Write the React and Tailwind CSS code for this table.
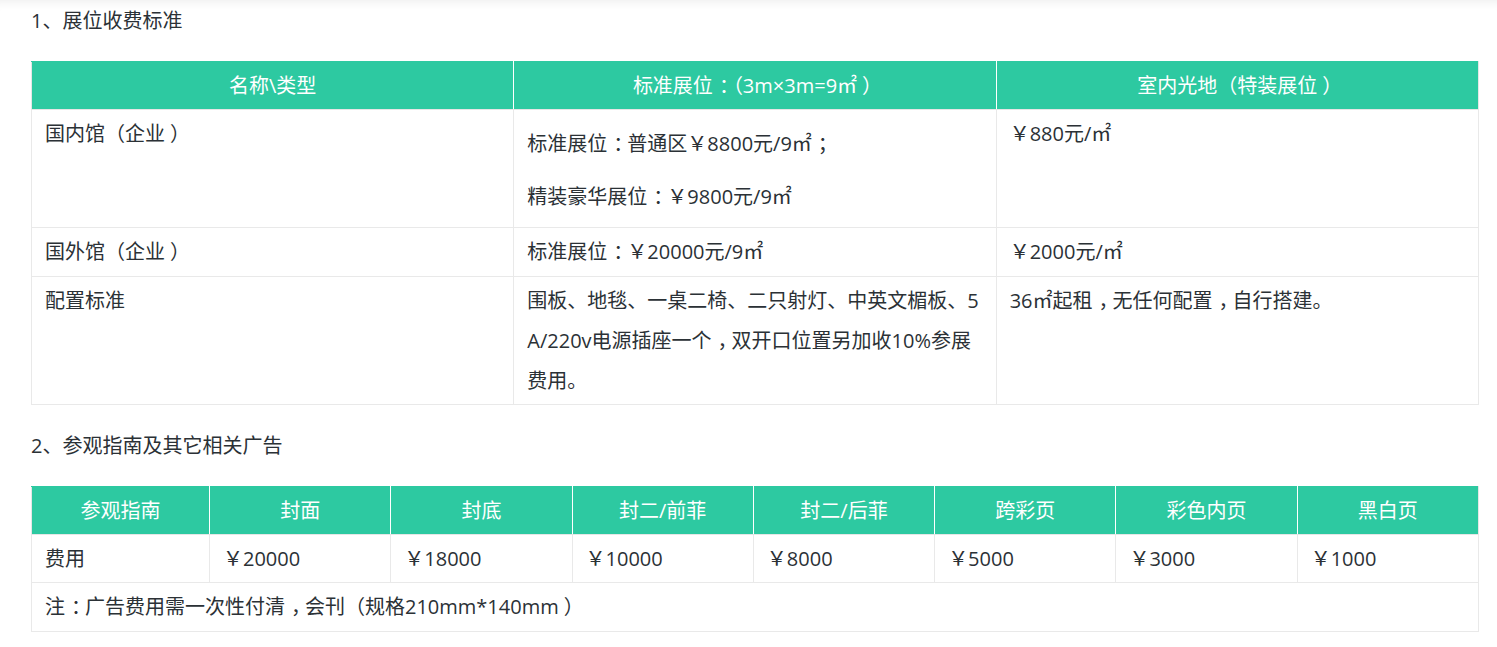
import React from "react";

const font = { fontFamily: '"Open Sans", "Noto Sans CJK SC", sans-serif' };

// the reference font centres full-width punctuation; pad the glyph towards the middle
const nudge = {
  "：": "pl-[6px] tracking-[-6px]",
  "，": "pl-[6px] tracking-[-6px]",
  "；": "pl-[6px] tracking-[-6px]",
  "）": "pl-[5px] tracking-[-5px]",
};

const Txt = ({ children }) =>
  String(children)
    .split(/([：），；])/)
    .map((part, i) =>
      nudge[part] ? (
        <span key={i} className={`leading-none ${nudge[part]}`}>
          {part}
        </span>
      ) : (
        part
      )
    );

const booth = [
  {
    name: "国内馆（企业）",
    std: ["标准展位：普通区￥8800元/9㎡；", "精装豪华展位：￥9800元/9㎡"],
    raw: "￥880元/㎡",
  },
  { name: "国外馆（企业）", std: ["标准展位：￥20000元/9㎡"], raw: "￥2000元/㎡" },
  {
    name: "配置标准",
    std: ["围板、地毯、一桌二椅、二只射灯、中英文楣板、5A/220v电源插座一个，双开口位置另加收10%参展费用。"],
    raw: "36㎡起租，无任何配置，自行搭建。",
    tight: true,
  },
];

const adHeads = ["参观指南", "封面", "封底", "封二/前菲", "封二/后菲", "跨彩页", "彩色内页", "黑白页"];
const adCosts = ["费用", "￥20000", "￥18000", "￥10000", "￥8000", "￥5000", "￥3000", "￥1000"];

const th = "bg-[#2dc9a1] text-white font-normal text-center h-[48px] px-[14px] border border-[#e6e6e6] border-l-white border-r-white first:border-l-[#e6e6e6] last:border-r-[#e6e6e6] border-t-[#2dc9a1]";
const td = "border border-[#e9e9e9] px-[13px] pt-[4px] align-top text-left break-all";

const App = () => {
  return (
    <div
      className="min-h-[647px] bg-white text-[#2b3136] text-[20px] leading-[40px] pl-[31px] pr-[18px] pt-[1px] shadow-[inset_0_10px_10px_-8px_rgba(0,0,0,0.07)]"
      style={font}
    >
      <h3 className="font-normal">
        <Txt>1、展位收费标准</Txt>
      </h3>
      <table className="mt-[20px] w-[1448px] table-fixed border-collapse">
        <thead>
          <tr>
            <th className={th}>名称\类型</th>
            <th className={th}>
              <Txt>标准展位：（3m×3m=9㎡）</Txt>
            </th>
            <th className={th}>
              <Txt>室内光地（特装展位）</Txt>
            </th>
          </tr>
        </thead>
        <tbody>
          {booth.map((row, i) => {
            const cell = `${td} ${row.tight ? "pb-[3px]" : "pb-[4px]"}`;
            return (
              <tr key={i}>
                <td className={cell}>
                  <Txt>{row.name}</Txt>
                </td>
                <td className={cell}>
                  {row.std.length > 1 ? (
                    <div className="pt-[10px] pb-[6px] flex flex-col gap-[13px]">
                      {row.std.map((s) => (
                        <p key={s}>
                          <Txt>{s}</Txt>
                        </p>
                      ))}
                    </div>
                  ) : (
                    <Txt>{row.std[0]}</Txt>
                  )}
                </td>
                <td className={cell}>
                  <Txt>{row.raw}</Txt>
                </td>
              </tr>
            );
          })}
        </tbody>
      </table>

      <h3 className="font-normal mt-[21px]">
        <Txt>2、参观指南及其它相关广告</Txt>
      </h3>
      <table className="mt-[20px] w-[1448px] table-fixed border-collapse">
        <thead>
          <tr>
            {adHeads.map((h, i) => (
              <th key={h} className={`${th} ${i === 0 ? "w-[178px]" : ""}`}>
                {h}
              </th>
            ))}
          </tr>
        </thead>
        <tbody>
          <tr>
            {adCosts.map((c) => (
              <td key={c} className={`${td} pb-[3px]`}>
                {c}
              </td>
            ))}
          </tr>
          <tr>
            <td colSpan={8} className={`${td} pb-[4px] h-[49px]`}>
              <Txt>注：广告费用需一次性付清，会刊（规格210mm*140mm）</Txt>
            </td>
          </tr>
        </tbody>
      </table>
    </div>
  );
};

export default App;
